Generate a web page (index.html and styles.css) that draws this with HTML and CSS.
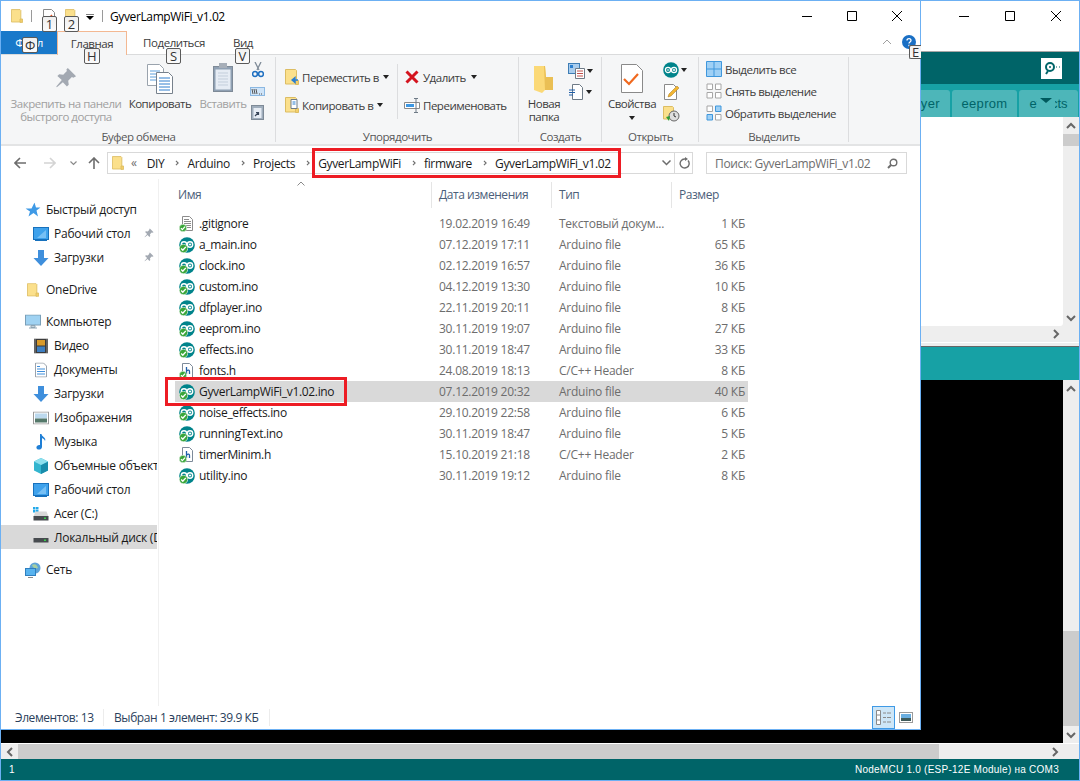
FILE: index.html
```html
<!DOCTYPE html>
<html lang="en">
<head>
    <meta charset="UTF-8">
    <title>GyverLampWiFi_v1.02</title>
    <link rel="stylesheet" href="styles.css">
</head>
<body>
    <svg class="defs" width="0" height="0">
        <defs>
            <symbol id="folder" viewBox="0 0 14 16">
                <path d="M.5.5h10l1 1v13.5H.5z" fill="#fbe08c" stroke="#dcbd63"/>
                <path d="M10.5 11.5h3v4h-3z" fill="#f4cf6a" stroke="#dcbd63"/>
            </symbol>
            <symbol id="check" viewBox="0 0 9 9">
                <circle cx="4.5" cy="4.5" r="4.2" fill="#3aa63a" stroke="#fff" stroke-width=".6"/>
                <path d="M2.2 4.6l1.6 1.7 3-3.4" fill="none" stroke="#fff" stroke-width="1.4"/>
            </symbol>
            <symbol id="ino" viewBox="0 0 16 16">
                <circle cx="8" cy="8" r="7.8" fill="#00848b"/>
                <circle cx="5" cy="7.500" r="2.700" fill="none" stroke="#fff" stroke-width="1.400"/>
                <circle cx="11" cy="7.500" r="2.700" fill="none" stroke="#fff" stroke-width="1.400"/>
                <path d="M9.800 7.500h2.400M11 6.300v2.400" stroke="#fff"/>
                <use href="#check" x="0" y="7" width="9" height="9"/>
            </symbol>
            <symbol id="hfile" viewBox="0 0 16 16">
                <path d="M3.5.5h7l3 3v11h-10z" fill="#fff" stroke="#7d8a99"/>
                <path d="M7.5 4v7M7.5 8c2-1.5 3-.8 3 .5V11" fill="none" stroke="#1f5fa8" stroke-width="1.3"/>
                <use href="#check" x="0" y="8" width="8" height="8"/>
            </symbol>
            <symbol id="textfile" viewBox="0 0 16 16">
                <path d="M3.5.5h7l3 3v11h-10z" fill="#fff" stroke="#8c8c8c"/>
                <path d="M5 3.5h5M5 5.5h7M5 7.5h7M7 9.5h5M8 11.5h4" stroke="#8c8c8c"/>
                <use href="#check" x="0" y="8" width="8" height="8"/>
            </symbol>
            <symbol id="pin" viewBox="0 0 12 12">
                <path d="M7 .5l4.5 4.5-1.5.8-.8-.3-2 2 .3 2.2-1 1-2.2-2.4L1 11l-.3-.3 3-3.6L1.3 4.9l1-1 2.2.3 2-2-.3-.8z" fill="#a3a9b2"/>
            </symbol>
            <symbol id="monitor" viewBox="0 0 16 16">
                <rect x=".5" y="1.5" width="15" height="12" fill="#3fa2ec" stroke="#1771bd"/>
                <path d="M4 12L13 4v8z" fill="#77c0f5"/>
                <path d="M2 14.5h12" stroke="#1771bd"/>
            </symbol>
            <symbol id="download" viewBox="0 0 16 16">
                <path d="M5 0h6v8h4.500L8 16 .5 8H5z" fill="#3f8fdc"/>
            </symbol>
            <symbol id="drive" viewBox="0 0 16 10">
                <path d="M2.500.5h11l2 5h-15z" fill="#d8d8d8"/>
                <rect x=".5" y="5" width="15" height="4.500" fill="#474b4f"/>
                <rect x="11" y="6.500" width="2" height="1.500" fill="#37d24a"/>
            </symbol>
            <symbol id="small-doc" viewBox="0 0 16 16">
                <path d="M4.500.5h7l3 3v12h-10z" fill="#fff" stroke="#6e7a86"/>
                <path d="M1 6h6M1 8.500h6M1 11h4" stroke="#1f5fa8"/>
            </symbol>
            <symbol id="grid-all" viewBox="0 0 16 16">
                <path d="M.5.5h15v15H.5z" fill="#9fd0f5" stroke="#3f97dc"/>
                <path d="M8 0v16M0 8h16" stroke="#3f97dc"/>
            </symbol>
            <symbol id="grid-none" viewBox="0 0 16 16">
                <path d="M1 1h5.500v5.500H1zM9.500 1H15v5.500H9.500zM1 9.500h5.500V15H1zM9.500 9.500H15V15H9.500z" fill="#fff" stroke="#a6a6a6"/>
            </symbol>
            <symbol id="grid-invert" viewBox="0 0 16 16">
                <path d="M1 1h5.500v5.500H1zM9.500 9.500H15V15H9.500z" fill="#fff" stroke="#a6a6a6"/>
                <path d="M9.500 1H15v5.500H9.500zM1 9.500h5.500V15H1z" fill="#9fd0f5" stroke="#3f97dc"/>
            </symbol>
            <symbol id="sidearrow" viewBox="0 0 8 8">
                <path d="M1.500 .5l3.500 3.500-3.500 3.500" fill="none" stroke="#6d6d6d" stroke-width="1.800"/>
            </symbol>
        </defs>
    </svg>

    <!-- window behind -->
    <div class="sketch-window">
        <div class="sketch-title">
            <span class="win-btn"><svg width="12" height="12"><path d="M1 6.500h10" stroke="#000"/></svg></span>
            <span class="win-btn"><svg width="12" height="12"><path d="M1.500 1.500h9v9h-9z" fill="none" stroke="#000"/></svg></span>
            <span class="win-btn"><svg width="12" height="12"><path d="M1 1l10 10M11 1L1 11" stroke="#000"/></svg></span>
        </div>
        <div class="sketch-toolbar">
            <div class="serial-btn">
                <svg width="18" height="14" viewBox="0 0 18 14"><circle cx="7" cy="6" r="4" fill="none" stroke="#006468" stroke-width="2"/><circle cx="7" cy="6" r="1" fill="#006468"/><path d="M5 10l-2 3" stroke="#006468" stroke-width="2"/><path d="M13 6h1M16 6h1" stroke="#006468"/></svg>
            </div>
        </div>
        <div class="sketch-tabs">
            <span class="sketch-tab tab-player">dfplayer</span>
            <span class="sketch-tab tab-eeprom">eeprom</span>
            <span class="sketch-tab tab-effects">effects<i class="tab-menu"></i></span>
        </div>
        <div class="sketch-editor">
            <div class="editor-area">
                <div class="editor-text"></div>
                <div class="vscroll">
                    <svg class="sarrow" width="10" height="8"><path d="M1 6l4-4 4 4" fill="none" stroke="#666" stroke-width="2"/></svg>
                    <div class="editor-thumb"></div>
                    <div class="spacer"></div>
                    <svg class="sarrow" width="10" height="8"><path d="M1 2l4 4 4-4" fill="none" stroke="#666" stroke-width="2"/></svg>
                </div>
            </div>
            <div class="hscroll hscroll-editor">
                <svg class="sarrow" width="8" height="10"><path d="M2 1l4 4-4 4" fill="none" stroke="#666" stroke-width="2"/></svg>
            </div>
        </div>
        <div class="sketch-status"></div>
        <div class="sketch-console">
            <div class="console-text"></div>
            <div class="vscroll">
                <svg class="sarrow" width="10" height="8"><path d="M1 6l4-4 4 4" fill="none" stroke="#666" stroke-width="2"/></svg>
                <div class="spacer"></div>
                <div class="console-thumb"></div>
                <svg class="sarrow" width="10" height="8"><path d="M1 2l4 4 4-4" fill="none" stroke="#666" stroke-width="2"/></svg>
            </div>
        </div>
        <div class="hscroll-console">
            <div class="hs-left"><svg width="8" height="10"><path d="M6 1L2 5l4 4" fill="none" stroke="#666" stroke-width="2"/></svg></div>
            <div class="hs-thumb"></div>
            <div class="hs-track"><svg width="8" height="10"><path d="M2 1l4 4-4 4" fill="none" stroke="#666" stroke-width="2"/></svg></div>
        </div>
        <div class="sketch-footer">
            <span>1</span>
            <span class="board">NodeMCU 1.0 (ESP-12E Module) на COM3</span>
        </div>
    </div>

    <!-- explorer window -->
    <div class="explorer">
        <div class="titlebar">
            <svg class="ic-title" width="12" height="14"><use href="#folder"/></svg>
            <i class="tb-sep"></i>
            <svg class="ic-qa1" width="12" height="14" viewBox="0 0 12 14"><path d="M.5.5h8l3 3v10H.5z" fill="#fff" stroke="#8a8a8a"/><path d="M6 9l3-3" stroke="#e2582a" stroke-width="1.500"/></svg>
            <svg class="ic-qa2" width="12" height="14"><use href="#folder"/></svg>
            <svg class="ic-qa3" width="8" height="7" viewBox="0 0 8 7"><path d="M0 0h8" stroke="#000"/><path d="M0 2h8L4 6z"/></svg>
            <i class="tb-sep"></i>
            <span class="title-text">GyverLampWiFi_v1.02</span>
            <div class="win-controls">
                <span><svg width="12" height="12"><path d="M1 6.500h10" stroke="#000"/></svg></span>
                <span><svg width="12" height="12"><path d="M1.500 1.500h9v9h-9z" fill="none" stroke="#000"/></svg></span>
                <span><svg width="12" height="12"><path d="M1 1l10 10M11 1L1 11" stroke="#000"/></svg></span>
            </div>
        </div>
        <div class="tabs">
            <span class="tab tab-file">Файл</span>
            <span class="tab tab-active">Главная</span>
            <span class="tab tab-share">Поделиться</span>
            <span class="tab tab-view">Вид</span>
            <svg class="collapse" width="10" height="6"><path d="M1 5l4-4 4 4" fill="none" stroke="#a0a0a0"/></svg>
            <svg class="help" width="14" height="14" viewBox="0 0 14 14"><circle cx="7" cy="7" r="7" fill="#1a6fc4"/><path d="M5 5.500c0-2.500 4-2.500 4 0 0 1.500-2 1.500-2 3M7 9.800v1.500" fill="none" stroke="#fff" stroke-width="1.300"/></svg>
        </div>
        <div class="ribbon">
            <div class="group g-clip">
                <div class="group-body">
                    <div class="big-btn btn-pin disabled">
                        <span class="big-icon"><svg width="22" height="22"><use href="#pin"/></svg></span>
                        <span>Закрепить на панели<br>быстрого доступа</span>
                    </div>
                    <div class="big-btn btn-copy">
                        <span class="big-icon">
                            <svg width="26" height="30" viewBox="0 0 26 30"><path d="M.5.500h12l4 4v17H.5z" fill="#fff" stroke="#9aa3ad"/><path d="M3 7h10M3 10h10M3 13h10M3 16h10" stroke="#5da0dc"/><path d="M9.500 8.500h12l4 4v17h-16z" fill="#fff" stroke="#77818c"/><path d="M12 14h11M12 17h11M12 20h11M12 23h11M12 26h11" stroke="#2f7fce"/></svg>
                        </span>
                        <span>Копировать</span>
                    </div>
                    <div class="big-btn btn-paste disabled">
                        <span class="big-icon">
                            <svg width="20" height="29" viewBox="0 0 20 29"><rect x=".5" y="3.500" width="19" height="25" fill="#8fa0b3" stroke="#7e8a97"/><rect x="2.500" y="6.500" width="15" height="20" fill="#e6ecf4"/><path d="M5 10h10M5 13h10M5 16h10M5 19h10M5 22h10" stroke="#c3cedb"/><rect x="6" y="0" width="8" height="5" fill="#a6aeb8"/></svg>
                        </span>
                        <span>Вставить</span>
                    </div>
                    <div class="clip-small">
                        <svg width="12" height="16" viewBox="0 0 12 16"><path d="M3 0l4 8M9 0L5 8" stroke="#7e8a97" stroke-width="1.300"/><circle cx="3" cy="12" r="2.400" fill="none" stroke="#1f6fc0" stroke-width="1.500"/><circle cx="9" cy="12" r="2.400" fill="none" stroke="#1f6fc0" stroke-width="1.500"/></svg>
                        <svg width="15" height="9" viewBox="0 0 15 9"><rect x=".5" y=".5" width="14" height="8" fill="#cfe4f8" stroke="#8bb8e2"/><path d="M2 2l1 5M4 2l1 5M6 2l1 5" stroke="#555"/><path d="M9 7h1M11 7h1" stroke="#555"/></svg>
                        <svg width="13" height="16" viewBox="0 0 13 16"><rect x=".5" y="1.500" width="12" height="14" fill="#9fadbc" stroke="#7e8a97"/><rect x="2.500" y="4" width="8" height="10" fill="#e6ecf4"/><path d="M4 12l3-3M5 8.500h2.500V11" fill="none" stroke="#39465a" stroke-width="1.200"/></svg>
                    </div>
                </div>
                <div class="group-label">Буфер обмена</div>
            </div>
            <div class="group g-org">
                <div class="group-body">
                    <div class="org-col org-first">
                        <div class="org-row">
                            <svg width="14" height="16" viewBox="0 0 14 16"><use href="#folder"/><path d="M13 11H8M10 8.500L7 11l3 2.500z" stroke="#2b7fd0" fill="#2b7fd0" stroke-width="1.300"/></svg>
                            <span>Переместить в</span><i class="caret"></i>
                        </div>
                        <div class="org-row">
                            <svg width="14" height="16" viewBox="0 0 14 16"><use href="#folder"/><path d="M6 2.500h6v9H6z" fill="#fff" stroke="#6e7a86"/><path d="M7.500 5h3M7.500 7h3" stroke="#2b7fd0"/></svg>
                            <span>Копировать в</span><i class="caret"></i>
                        </div>
                    </div>
                    <div class="org-col org-second">
                        <div class="org-row">
                            <svg width="14" height="14" viewBox="0 0 14 14"><path d="M1.500 1.500l11 11M12.500 1.500l-11 11" stroke="#d4141e" stroke-width="3"/></svg>
                            <span>Удалить</span><i class="caret"></i>
                        </div>
                        <div class="org-row rename">
                            <svg width="16" height="15" viewBox="0 0 16 15"><path d="M.5 4.500h15v6H.5z" fill="#fff" stroke="#8a8a8a"/><path d="M2 6h8v3H2z" fill="#3d97e2"/><path d="M12 .5v14M10 .5h4M10 14.500h4" stroke="#6e7a86"/></svg>
                            <span>Переименовать</span>
                        </div>
                    </div>
                </div>
                <div class="group-label">Упорядочить</div>
            </div>
            <div class="group g-new">
                <div class="group-body">
                    <div class="big-btn btn-newfolder">
                        <span class="big-icon">
                            <svg width="20" height="28" viewBox="0 0 20 28"><path d="M0 1h11l1 11h7v13h-8l-3 3-8-3z" fill="#fbd977"/><path d="M10 1h1l1 11h7v13h-8z" fill="#eabf54"/></svg>
                        </span>
                        <span>Новая<br>папка</span>
                    </div>
                    <div class="small-col new-col">
                        <div class="small-row">
                            <svg width="17" height="16" viewBox="0 0 17 16"><rect x=".5" y=".5" width="11" height="10" fill="#a9cdee" stroke="#3e7db5"/><rect x="2" y="2" width="3" height="3" fill="#2b7fd0"/><path d="M7.500 5.500h9v10h-9z" fill="#fff" stroke="#6e7a86"/><path d="M9 8h6M9 10.500h6M9 13h6" stroke="#c0504d"/></svg><i class="caret"></i>
                        </div>
                        <div class="small-row">
                            <svg width="16" height="16"><use href="#small-doc"/></svg><i class="caret"></i>
                        </div>
                    </div>
                </div>
                <div class="group-label">Создать</div>
            </div>
            <div class="group g-open">
                <div class="group-body">
                    <div class="big-btn btn-props">
                        <span class="big-icon">
                            <svg width="22" height="29" viewBox="0 0 22 29"><path d="M.5.500h15l6 6v22H.500z" fill="#fff" stroke="#8a8a8a"/><path d="M3 15l5 5 9-10" fill="none" stroke="#f0691f" stroke-width="2.200"/></svg>
                        </span>
                        <span>Свойства</span>
                        <i class="caret caret-under"></i>
                    </div>
                    <div class="small-col open-col">
                        <div class="small-row">
                            <svg width="16" height="16" viewBox="0 0 16 16"><circle cx="8" cy="8" r="7.800" fill="#00848b"/><circle cx="5" cy="8" r="2.600" fill="none" stroke="#fff" stroke-width="1.200"/><circle cx="11" cy="8" r="2.600" fill="none" stroke="#fff" stroke-width="1.200"/><path d="M9.800 8h2.400M11 6.800v2.400M3.900 8h2.200" stroke="#fff"/></svg><i class="caret"></i>
                        </div>
                        <div class="small-row">
                            <svg width="16" height="16" viewBox="0 0 16 16"><path d="M1.500.5h9l3 3v12h-12z" fill="#fff" stroke="#8a8a8a"/><path d="M5 13l1-3 8-8 2 2-8 8z" fill="#f2b531" stroke="#a8781a" stroke-width=".5"/></svg>
                        </div>
                        <div class="small-row">
                            <svg width="17" height="16" viewBox="0 0 17 16"><path d="M.5.500h9l1 1V13H.5z" fill="#fbe08c" stroke="#dcbd63"/><circle cx="11" cy="10" r="5" fill="#dedede" stroke="#666"/><path d="M11 7v3l2 1" fill="none" stroke="#333"/><path d="M3 11l3 4 1-5z" fill="#2f9e36"/></svg>
                        </div>
                    </div>
                </div>
                <div class="group-label">Открыть</div>
            </div>
            <div class="group g-select">
                <div class="group-body select-rows">
                    <div class="small-row"><svg width="16" height="16"><use href="#grid-all"/></svg><span>Выделить все</span></div>
                    <div class="small-row"><svg width="16" height="16"><use href="#grid-none"/></svg><span>Снять выделение</span></div>
                    <div class="small-row"><svg width="16" height="16"><use href="#grid-invert"/></svg><span>Обратить выделение</span></div>
                </div>
                <div class="group-label">Выделить</div>
            </div>
        </div>
        <div class="addressrow">
            <div class="nav">
                <svg width="12" height="12" viewBox="0 0 12 12"><path d="M6 1L1 6l5 5M1 6h11" fill="none" stroke="#6d6d6d" stroke-width="1.600"/></svg>
                <svg width="12" height="12" viewBox="0 0 12 12"><path d="M6 1l5 5-5 5M11 6H0" fill="none" stroke="#d4d4d4" stroke-width="1.600"/></svg>
                <svg width="7" height="5" viewBox="0 0 7 5"><path d="M.5.5l3 3 3-3" fill="none" stroke="#8a8a8a" stroke-width="1.200"/></svg>
                <svg width="12" height="12" viewBox="0 0 12 12"><path d="M1 6l5-5 5 5M6 1v11" fill="none" stroke="#6d6d6d" stroke-width="1.600"/></svg>
            </div>
            <div class="addressbox">
                <svg class="addr-folder" width="12" height="14"><use href="#folder"/></svg>
                <span class="crumb-more">«</span>
                <span>DIY</span><svg class="sep" width="5" height="8"><use href="#sidearrow"/></svg>
                <span>Arduino</span><svg class="sep" width="5" height="8"><use href="#sidearrow"/></svg>
                <span>Projects</span><svg class="sep" width="5" height="8"><use href="#sidearrow"/></svg>
                <span>GyverLampWiFi</span><svg class="sep" width="5" height="8"><use href="#sidearrow"/></svg>
                <span>firmware</span><svg class="sep" width="5" height="8"><use href="#sidearrow"/></svg>
                <span>GyverLampWiFi_v1.02</span>
                <div class="addr-end">
                    <svg width="9" height="6" viewBox="0 0 9 6"><path d="M.5.5l4 4 4-4" fill="none" stroke="#6d6d6d" stroke-width="1.500"/></svg>
                    <i></i>
                    <svg width="11" height="12" viewBox="0 0 11 12"><path d="M9 3.500A4.500 4.500 0 1 1 5.500 2H7" fill="none" stroke="#6d6d6d" stroke-width="1.400"/><path d="M6 0l3 2-3 2z" fill="#6d6d6d"/></svg>
                </div>
            </div>
            <div class="searchbox">
                <span>Поиск: GyverLampWiFi_v1.02</span>
                <svg width="11" height="11" viewBox="0 0 11 11"><circle cx="6.500" cy="4.500" r="3.300" fill="none" stroke="#6d6d6d" stroke-width="1.400"/><path d="M4 7l-3 3" stroke="#6d6d6d" stroke-width="2"/></svg>
            </div>
        </div>
        <div class="content">
            <nav class="sidebar">
                <div class="side-group">
                    <div class="side-item top"><svg width="15" height="15" viewBox="0 0 15 15"><path d="M9 0l1.500 5H15l-4 3 1.500 6L8 10.500 3 14l1.500-5L0 6h6z" fill="#3f9ae6"/></svg>Быстрый доступ</div>
                    <div class="side-item"><svg width="16" height="16"><use href="#monitor"/></svg>Рабочий стол<svg class="side-pin" width="10" height="10"><use href="#pin"/></svg></div>
                    <div class="side-item"><svg width="16" height="16"><use href="#download"/></svg>Загрузки<svg class="side-pin" width="10" height="10"><use href="#pin"/></svg></div>
                </div>
                <div class="side-group">
                    <div class="side-item top"><svg width="12" height="16" viewBox="0 0 14 16"><use href="#folder"/></svg>OneDrive</div>
                </div>
                <div class="side-group">
                    <div class="side-item top"><svg width="16" height="15" viewBox="0 0 16 15"><rect x=".5" y=".5" width="15" height="10" fill="#9fd2f2" stroke="#7a9fb8"/><path d="M6 11h4v2H6zM4 13.500h8" stroke="#8fa5b3" fill="#c5d3dc"/></svg>Компьютер</div>
                    <div class="side-item"><svg width="14" height="15" viewBox="0 0 14 15"><rect width="14" height="15" fill="#3b3b3b"/><rect x="3" y="1.500" width="8" height="5.500" fill="#d89a2b"/><rect x="3" y="8" width="8" height="5.500" fill="#3d7fc2"/><path d="M1 1v13M13 1v13" stroke="#ddd" stroke-dasharray="1 1"/></svg>Видео</div>
                    <div class="side-item"><svg width="12" height="15" viewBox="0 0 12 15"><path d="M.5.500h8l3 3v11H.5z" fill="#fff" stroke="#9aa3ad"/><path d="M2 4h3M2 6.500h8M2 9h8M2 11.500h8" stroke="#3f8fdc"/></svg>Документы</div>
                    <div class="side-item"><svg width="16" height="16"><use href="#download"/></svg>Загрузки</div>
                    <div class="side-item"><svg width="16" height="13" viewBox="0 0 16 13"><rect x=".5" y=".5" width="15" height="12" fill="#fff" stroke="#9a9a9a"/><rect x="2" y="2" width="12" height="5" fill="#bcd9ee"/><rect x="2" y="7" width="12" height="4" fill="#54786a"/></svg>Изображения</div>
                    <div class="side-item"><svg width="12" height="16" viewBox="0 0 12 16"><path d="M5 0h1.500c.5 3 5 3.500 3.500 7-.5-2-2-2.500-3-3v9c0 3-5 3.500-5.500 1C1 12 3 10.500 5 11z" fill="#1f7fd6"/></svg>Музыка</div>
                    <div class="side-item"><svg width="16" height="16" viewBox="0 0 16 16"><path d="M8 0l7 3.500v9L8 16l-7-3.500v-9z" fill="#33b5cf"/><path d="M8 7l7-3.500v9L8 16z" fill="#1a8cab"/><path d="M8 0l7 3.500L8 7 1 3.500z" fill="#8fe0ee"/></svg><span class="clip">Объемные объекты</span></div>
                    <div class="side-item"><svg width="16" height="16"><use href="#monitor"/></svg>Рабочий стол</div>
                    <div class="side-item"><svg width="16" height="14" viewBox="0 0 16 14"><path d="M0 0h2.500v2.500H0zM3 0h2.500v2.500H3zM0 3h2.500v2.500H0zM3 3h2.500v2.500H3z" fill="#23a9ea"/><use href="#drive" y="4" height="10" width="16"/></svg>Acer (C:)</div>
                    <div class="side-item selected"><svg width="16" height="10"><use href="#drive"/></svg><span class="clip">Локальный диск (D:)</span></div>
                </div>
                <div class="side-group">
                    <div class="side-item top"><svg width="16" height="16" viewBox="0 0 16 16"><circle cx="10" cy="6" r="5.500" fill="#5fa4d8"/><path d="M7 3c3-2 5 0 6 3-3 1-5 0-6-3z" fill="#a7cfa0"/><rect x=".5" y="6.500" width="10" height="7" fill="#57b3ef" stroke="#2f7fbf"/><path d="M3 15.500h5" stroke="#888"/></svg>Сеть</div>
                </div>
            </nav>
            <div class="filelist">
                <div class="listhead">
                    <span class="col-name">Имя<svg class="sort" width="8" height="5"><path d="M.5 4.500l3.500-3.500 3.500 3.500" fill="none" stroke="#8a8a8a"/></svg></span>
                    <span>Дата изменения</span>
                    <span>Тип</span>
                    <span>Размер</span>
                </div>
                <div class="filerow"><span class="fname"><svg width="16" height="16"><use href="#textfile"/></svg>.gitignore</span><span>19.02.2019 16:49</span><span>Текстовый докум...</span><span class="fsize">1 КБ</span></div>
                <div class="filerow"><span class="fname"><svg width="16" height="16"><use href="#ino"/></svg>a_main.ino</span><span>07.12.2019 17:11</span><span>Arduino file</span><span class="fsize">65 КБ</span></div>
                <div class="filerow"><span class="fname"><svg width="16" height="16"><use href="#ino"/></svg>clock.ino</span><span>02.12.2019 16:57</span><span>Arduino file</span><span class="fsize">36 КБ</span></div>
                <div class="filerow"><span class="fname"><svg width="16" height="16"><use href="#ino"/></svg>custom.ino</span><span>04.12.2019 13:30</span><span>Arduino file</span><span class="fsize">10 КБ</span></div>
                <div class="filerow"><span class="fname"><svg width="16" height="16"><use href="#ino"/></svg>dfplayer.ino</span><span>22.11.2019 20:11</span><span>Arduino file</span><span class="fsize">8 КБ</span></div>
                <div class="filerow"><span class="fname"><svg width="16" height="16"><use href="#ino"/></svg>eeprom.ino</span><span>30.11.2019 19:07</span><span>Arduino file</span><span class="fsize">27 КБ</span></div>
                <div class="filerow"><span class="fname"><svg width="16" height="16"><use href="#ino"/></svg>effects.ino</span><span>30.11.2019 18:47</span><span>Arduino file</span><span class="fsize">33 КБ</span></div>
                <div class="filerow"><span class="fname"><svg width="16" height="16"><use href="#hfile"/></svg>fonts.h</span><span>24.08.2019 18:13</span><span>C/C++ Header</span><span class="fsize">8 КБ</span></div>
                <div class="filerow selected"><span class="fname"><svg width="16" height="16"><use href="#ino"/></svg>GyverLampWiFi_v1.02.ino</span><span>07.12.2019 20:32</span><span>Arduino file</span><span class="fsize">40 КБ</span></div>
                <div class="filerow"><span class="fname"><svg width="16" height="16"><use href="#ino"/></svg>noise_effects.ino</span><span>29.10.2019 22:58</span><span>Arduino file</span><span class="fsize">6 КБ</span></div>
                <div class="filerow"><span class="fname"><svg width="16" height="16"><use href="#ino"/></svg>runningText.ino</span><span>30.11.2019 18:47</span><span>Arduino file</span><span class="fsize">5 КБ</span></div>
                <div class="filerow"><span class="fname"><svg width="16" height="16"><use href="#hfile"/></svg>timerMinim.h</span><span>15.10.2019 21:18</span><span>C/C++ Header</span><span class="fsize">2 КБ</span></div>
                <div class="filerow"><span class="fname"><svg width="16" height="16"><use href="#ino"/></svg>utility.ino</span><span>30.11.2019 19:12</span><span>Arduino file</span><span class="fsize">8 КБ</span></div>
            </div>
        </div>
        <div class="statusbar">
            <span class="st-count">Элементов: 13</span>
            <span class="st-sel">Выбран 1 элемент: 39.9 КБ</span>
            <div class="view-btns">
                <span class="view-on"><svg width="16" height="15" viewBox="0 0 16 15"><path d="M.5.500h4v14h-4z" fill="#fff" stroke="#8a8a8a"/><path d="M.5 5h4M.5 10h4M7 3h3M11 3h4M7 7.500h3M11 7.500h4M7 12h3M11 12h4" stroke="#8a8a8a"/></svg></span>
                <span class="view-off"><svg width="14" height="11" viewBox="0 0 14 11"><rect x=".5" y=".5" width="13" height="10" fill="#fff" stroke="#9a9a9a"/><rect x="2" y="2" width="10" height="4" fill="#6aaee0"/><rect x="2" y="6" width="10" height="3" fill="#3e5a5a"/></svg></span>
            </div>
        </div>

        <span class="keytip tip-1">1</span>
        <span class="keytip tip-2">2</span>
        <span class="keytip tip-f">Ф</span>
        <span class="keytip tip-h">H</span>
        <span class="keytip tip-s">S</span>
        <span class="keytip tip-v">V</span>
        <span class="keytip tip-e">E</span>
        <div class="redbox red-address"></div>
        <div class="redbox red-file"></div>
    </div>
</body>
</html>
```

FILE: styles.css
```css
* {
    box-sizing: border-box;
}
html, body {
    margin: 0;
    height: 100%;
    overflow: hidden;
}
body {
    position: relative;
    width: 1080px;
    height: 781px;
    font-family: "Open Sans", "Noto Sans", sans-serif;
    font-size: 12px;
    letter-spacing: -0.25px;
    color: #000;
    background: #000;
}
svg {
    flex: none;
    display: block;
}
.defs {
    position: absolute;
}
i {
    font-style: normal;
}

/* window behind */
.sketch-window {
    position: absolute;
    left: 0;
    top: 0;
    width: 1080px;
    height: 781px;
    display: flex;
    flex-direction: column;
    border: 1px solid #6cb0f3;
    background: #fff;
    font-family: "Liberation Sans", sans-serif;
    letter-spacing: 0;
}
.sketch-title {
    height: 51px;
    flex: none;
    display: flex;
    justify-content: flex-end;
    padding: 9px 17px 0 0;
    gap: 34px;
    border-bottom: 1px solid #a6a6a6;
}
.win-btn svg {
    display: block;
}
.sketch-toolbar {
    height: 32px;
    flex: none;
    background: #006468;
    display: flex;
    justify-content: flex-end;
    align-items: center;
    padding-right: 17px;
}
.serial-btn {
    width: 21px;
    height: 21px;
    background: #fff;
    display: flex;
    align-items: center;
    justify-content: center;
}
.sketch-tabs {
    height: 33px;
    flex: none;
    background: #17a1a5;
    display: flex;
    align-items: flex-end;
    gap: 2px;
    padding-left: 880px;
    font-size: 13px;
    letter-spacing: 0.3px;
    color: #006468;
}
.sketch-tab {
    height: 27px;
    display: flex;
    align-items: center;
    justify-content: center;
    background: #4db6b9;
    border-radius: 3px 3px 0 0;
    position: relative;
}
.tab-player {
    width: 69px;
}
.tab-eeprom {
    width: 65px;
}
.tab-effects {
    width: 59px;
    letter-spacing: 0;
}
.tab-menu {
    position: absolute;
    left: 18px;
    top: 4px;
    width: 18px;
    height: 14px;
    background: #4db6b9;
}
.tab-menu::after {
    content: "";
    position: absolute;
    left: 3px;
    top: 4px;
    border: 6px solid transparent;
    border-top: 5px solid #00595d;
    border-bottom: 0;
}
.sketch-editor {
    height: 230px;
    flex: none;
    display: flex;
    flex-direction: column;
    background: #eee;
    border-bottom: 1px solid #666;
}
.editor-area {
    height: 209px;
    flex: none;
    display: flex;
}
.editor-text {
    flex: 1;
    background: #fff;
    border-radius: 0 0 3px 0;
}
.vscroll {
    width: 16px;
    flex: none;
    background: #eee;
    display: flex;
    flex-direction: column;
    align-items: center;
}
.sarrow {
    margin: 5px auto 4px;
}
.editor-thumb {
    width: 100%;
    height: 12px;
    background: #ccc;
}
.spacer {
    flex: 1;
}
.hscroll {
    height: 17px;
    flex: none;
    display: flex;
    justify-content: flex-end;
    padding-right: 19px;
    background: #eee;
    border-bottom: 1px solid #fff;
}
.hscroll .sarrow {
    margin: 3px 0 0;
}
.sketch-status {
    height: 33px;
    flex: none;
    background: #17a1a5;
}
.sketch-console {
    height: 363px;
    flex: none;
    display: flex;
    background: #000;
}
.console-text {
    flex: 1;
}
.console-thumb {
    width: 100%;
    height: 95px;
    background: #ccc;
}
.hscroll-console {
    height: 16px;
    flex: none;
    display: flex;
    border-top: 1px solid #fff;
    background: #eee;
}
.hs-left {
    width: 17px;
    display: flex;
    align-items: center;
    justify-content: center;
}
.hs-thumb {
    width: 921px;
    background: #ccc;
}
.hs-track {
    flex: 1;
    display: flex;
    align-items: center;
    justify-content: flex-end;
    padding-right: 20px;
}
.sketch-footer {
    flex: 1;
    background: #006468;
    color: #fff;
    display: flex;
    justify-content: space-between;
    align-items: center;
    padding: 0 20px 0 8px;
    font-size: 10px;
    letter-spacing: 0.25px;
}

/* explorer */
.explorer {
    position: absolute;
    left: 0;
    top: 0;
    width: 921px;
    height: 730px;
    background: #fff;
    border: 1px solid #6cb0f3;
    display: flex;
    flex-direction: column;
}
.titlebar {
    height: 30px;
    flex: none;
    display: flex;
    align-items: center;
}
.ic-title {
    margin-left: 10px;
}
.tb-sep {
    width: 1px;
    height: 12px;
    background: #9a9a9a;
}
.titlebar .ic-title + .tb-sep {
    margin-left: 8px;
}
.ic-qa1 {
    margin-left: 11px;
}
.ic-qa2 {
    margin-left: 10px;
}
.ic-qa3 {
    margin: 2px 0 0 9px;
}
.ic-qa3 + .tb-sep {
    margin-left: 8px;
}
.title-text {
    margin-left: 7px;
    padding-top: 1px;
    letter-spacing: -0.38px;
}
.win-controls {
    margin-left: auto;
    display: flex;
    gap: 33px;
    padding-right: 17px;
    margin-top: -1px;
}
.win-controls span {
    display: block;
    width: 12px;
}
.tabs {
    height: 24px;
    flex: none;
    display: flex;
    align-items: stretch;
    position: relative;
    border-bottom: 1px solid #dadbdc;
    color: #3c3c3c;
    font-size: 11.5px;
    letter-spacing: -0.45px;
}
.tab {
    display: flex;
    align-items: center;
    justify-content: center;
}
.tab-file {
    width: 56px;
    height: 23px;
    background: #1979ca;
    color: #fff;
}
.tab-active {
    width: 70px;
    height: 24px;
    background: #f5f6f7;
    border: 1px solid #f3b892;
    border-bottom: 0;
}
.tab-share {
    width: 92px;
    margin-left: 1px;
    padding-left: 0;
}
.tab-view {
    width: 50px;
    margin-left: 3px;
    padding-right: 10px;
}
.collapse {
    position: absolute;
    right: 28px;
    top: 8px;
}
.help {
    position: absolute;
    right: 4px;
    top: 4px;
}
.ribbon {
    height: 91px;
    flex: none;
    display: flex;
    background: #f5f6f7;
    border-bottom: 2px solid #e3e4e5;
    color: #3c3c3c;
    font-size: 11.5px;
    letter-spacing: -0.48px;
}
.group {
    display: flex;
    flex-direction: column;
    position: relative;
}
.group::after {
    content: "";
    position: absolute;
    right: 0;
    top: 2px;
    bottom: 2px;
    width: 1px;
    background: #dcdddf;
}
.g-clip {
    width: 275px;
}
.g-org {
    width: 243px;
}
.g-new {
    width: 83px;
}
.g-open {
    width: 97px;
}
.g-select {
    width: 150px;
}
.group-body {
    height: 72px;
    flex: none;
    display: flex;
}
.group-label {
    flex: 1;
    text-align: center;
    line-height: 17px;
    padding-top: 1px;
    color: #575757;
}
.big-btn {
    display: flex;
    flex-direction: column;
    align-items: center;
    text-align: center;
    line-height: 13px;
    padding-top: 3px;
    white-space: nowrap;
}
.big-icon {
    height: 39px;
    flex: none;
    display: flex;
    align-items: flex-start;
    justify-content: center;
}
.disabled {
    color: #a0a0a0;
}
.btn-pin {
    width: 118px;
    margin-left: 6px;
}
.btn-pin .big-icon {
    padding-top: 9px;
}
.btn-copy {
    width: 68px;
    margin-left: 1px;
}
.btn-copy .big-icon {
    padding-top: 6px;
}
.btn-paste {
    width: 52px;
    margin-left: 3px;
}
.btn-paste .big-icon {
    padding-top: 5px;
}
.clip-small {
    margin-left: 1px;
    padding-top: 7px;
    display: flex;
    flex-direction: column;
    align-items: center;
    gap: 6px;
    width: 15px;
}
.clip-small svg:nth-child(2) {
    margin-top: 3px;
}
.clip-small svg:nth-child(3) {
    margin-top: 2px;
}
.org-col {
    padding-top: 8px;
}
.org-first {
    width: 122px;
    padding-left: 9px;
    position: relative;
}
.org-first::after {
    content: "";
    position: absolute;
    right: 0;
    top: 9px;
    bottom: 8px;
    width: 1px;
    background: #dcdddf;
}
.org-second {
    padding-left: 7px;
}
.org-row {
    height: 28px;
    display: flex;
    align-items: center;
    gap: 3px;
    white-space: nowrap;
}
.org-second .org-row {
    gap: 4px;
}
.org-second .rename {
    margin-left: -1px;
    gap: 3px;
}
.org-row .caret {
    margin-left: 1px;
}
.caret {
    display: block;
    flex: none;
    width: 0;
    height: 0;
    border: 3.5px solid transparent;
    border-top: 4px solid #222;
    border-bottom: 0;
}
.caret-under {
    margin-top: 6px;
}
.btn-newfolder {
    width: 44px;
    margin-left: 3px;
}
.btn-newfolder .big-icon {
    padding-top: 7px;
}
.small-col {
    display: flex;
    flex-direction: column;
}
.new-col {
    padding: 5px 0 0 2px;
}
.small-row {
    height: 21px;
    display: flex;
    align-items: center;
    gap: 2px;
}
.btn-props {
    width: 60px;
}
.btn-props .big-icon {
    padding-top: 6px;
}
.open-col {
    padding: 4px 0 0 1px;
}
.open-col .small-row {
    height: 22px;
}
.select-rows {
    flex-direction: column;
    padding: 3px 0 0 7px;
}
.select-rows .small-row {
    height: 22px;
    gap: 3px;
}
.addressrow {
    height: 33px;
    flex: none;
    display: flex;
    align-items: center;
    padding-top: 1px;
}
.nav {
    width: 106px;
    display: flex;
    align-items: center;
    padding-left: 13px;
}
.nav svg:nth-child(2) {
    margin-left: 18px;
}
.nav svg:nth-child(3) {
    margin-left: 14px;
}
.nav svg:nth-child(4) {
    margin-left: 11px;
}
.addressbox {
    width: 586px;
    height: 22px;
    border: 1px solid #d9d9d9;
    display: flex;
    align-items: center;
    padding-left: 4px;
    color: #1a1a1a;
    letter-spacing: -0.33px;
}
.crumb-more {
    margin: -2px 10px 0 7px;
    color: #6d6d6d;
}
.sep {
    margin: 0 7px 0 11px;
}
.addr-end {
    margin-left: auto;
    display: flex;
    align-items: center;
    height: 100%;
}
.addr-end svg:first-child {
    margin-right: 3px;
}
.addr-end i {
    width: 1px;
    height: 100%;
    background: #d9d9d9;
    margin-right: 4px;
}
.addr-end svg:last-child {
    margin-right: 2px;
}
.searchbox {
    width: 201px;
    height: 22px;
    margin-left: 13px;
    border: 1px solid #d9d9d9;
    display: flex;
    align-items: center;
    justify-content: space-between;
    padding: 0 8px;
    color: #6d6d6d;
    letter-spacing: -0.33px;
}
.content {
    flex: 1;
    display: flex;
    min-height: 0;
}
.sidebar {
    width: 158px;
    flex: none;
    padding-top: 18px;
    border-right: 1px solid #f0f0f0;
    color: #1a1a1a;
}
.side-group {
    margin-bottom: 8px;
}
.side-item {
    width: 156px;
    height: 24px;
    display: flex;
    align-items: center;
    position: relative;
    padding: 1px 0 0 53px;
    white-space: nowrap;
}
.side-item svg:first-child {
    position: absolute;
    left: 40px;
    top: calc(50% + 1px);
    transform: translate(-50%, -50%);
}
.side-item.top {
    padding-left: 45px;
}
.side-item.top svg:first-child {
    left: 32px;
}
.side-item.selected {
    background: #d9d9d9;
}
.side-pin {
    position: absolute;
    left: 143px;
    top: 7px;
}
.clip {
    overflow: hidden;
    width: 103px;
}
.filelist {
    flex: 1;
    padding: 3px 0 0 16px;
}
.listhead {
    height: 25px;
    display: grid;
    grid-template-columns: 256px 120px 120px 80px;
    width: 576px;
    margin-bottom: 6px;
    color: #4c607a;
    line-height: 26px;
    letter-spacing: -0.45px;
}
.listhead span {
    padding-left: 7px;
    border-left: 1px solid #e5e5e5;
}
.listhead .col-name {
    padding-left: 3px;
    border-left: 0;
    position: relative;
}
.sort {
    position: absolute;
    left: 122px;
    top: -1px;
}
.filerow {
    height: 21px;
    width: 573px;
    display: grid;
    grid-template-columns: 256px 120px 120px 77px;
    align-items: center;
    color: #6d6d6d;
    white-space: nowrap;
}
.filerow span {
    padding-left: 8px;
}
.filerow .fname {
    display: flex;
    align-items: center;
    gap: 4px;
    padding-left: 4px;
    color: #1a1a1a;
    letter-spacing: -0.33px;
}
.filerow .fsize {
    text-align: right;
    padding: 0 3px 0 0;
}
.filerow.selected {
    background: #d9d9d9;
}
.statusbar {
    height: 23px;
    flex: none;
    display: flex;
    align-items: center;
    color: #2b3f5c;
    padding-left: 14px;
    letter-spacing: -0.42px;
}
.st-count {
    width: 89px;
    border-right: 1px solid #ececec;
}
.st-sel {
    width: 166px;
    padding-left: 10px;
    border-right: 1px solid #ececec;
}
.view-btns {
    margin-left: auto;
    display: flex;
    align-items: center;
    padding-right: 6px;
    height: 100%;
}
.view-on {
    width: 23px;
    height: 23px;
    background: #cde6f7;
    border: 1px solid #3f9ae6;
    display: flex;
    align-items: center;
    justify-content: center;
}
.view-off {
    margin-left: 4px;
    width: 15px;
}

/* overlays */
.keytip {
    position: absolute;
    height: 16px;
    min-width: 15px;
    padding: 0 2px;
    display: flex;
    align-items: center;
    justify-content: center;
    background: linear-gradient(#f0f0f0, #fbfbfb);
    border: 1px solid #5a5a5a;
    border-radius: 2px;
    font-size: 13px;
    color: #333;
    letter-spacing: 0;
}
.tip-1 {
    left: 41px;
    top: 15px;
}
.tip-2 {
    left: 63px;
    top: 15px;
}
.tip-f {
    left: 21px;
    top: 36px;
}
.tip-h {
    left: 83px;
    top: 47px;
}
.tip-s {
    left: 165px;
    top: 47px;
}
.tip-v {
    left: 234px;
    top: 47px;
}
.tip-e {
    left: 908px;
    top: 44px;
    height: 14px;
    min-width: 12px;
    border-right: 0;
    border-radius: 2px 0 0 2px;
}
.redbox {
    position: absolute;
    border: 3px solid #ed1c24;
    pointer-events: none;
}
.red-address {
    left: 311px;
    top: 147px;
    width: 309px;
    height: 30px;
}
.red-file {
    left: 164px;
    top: 376px;
    width: 182px;
    height: 29px;
}
```
